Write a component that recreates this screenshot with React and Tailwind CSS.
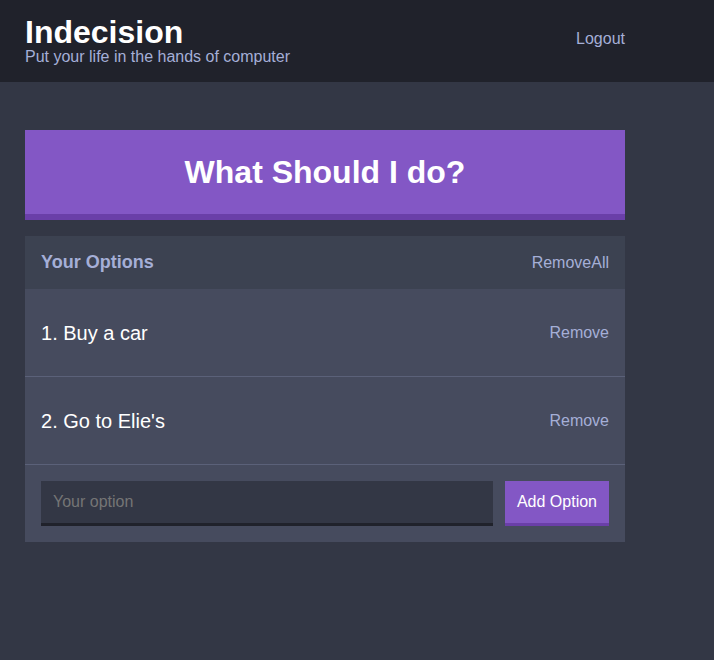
import React from "react";

export default function App() {
  const options = ["Buy a car", "Go to Elie's"];
  return (
    <div className="min-h-screen bg-[#333745] text-white" style={{ fontFamily: '"Liberation Sans", Arial, Helvetica, sans-serif' }}>
      <header className="bg-[#20222b] h-[82px]">
        <div className="ml-[25px] w-[600px] h-full flex items-center justify-between">
          <div className="flex flex-col">
            <h1 className="text-[32px] leading-[32px] font-bold m-0">Indecision</h1>
            <h2 className="text-[16px] leading-[18px] text-[#a5afd7] font-normal">Put your life in the hands of computer</h2>
          </div>
          <button className="text-[16px] text-[#a5afd7] bg-transparent mb-[4px]">Logout</button>
        </div>
      </header>
      <div className="ml-[25px] w-[600px] pt-[48px]">
        <button className="w-full h-[90px] bg-[#8357c5] border-b-[6px] border-[#6a3fa8] text-[32px] font-bold text-white flex items-center justify-center">
          What Should I do?
        </button>
        <div className="mt-[16px] bg-[#464b5e]">
          <div className="bg-[#3c4251] h-[53px] px-[16px] flex items-center justify-between">
            <h3 className="text-[18px] font-bold text-[#a5afd7]">Your Options</h3>
            <button className="text-[16px] text-[#a5afd7]">RemoveAll</button>
          </div>
          {options.map((o, i) => (
            <div key={o} className="h-[88px] px-[16px] border-b border-[#5b6179] flex items-center justify-between">
              <p className="text-[20px] text-white">{i + 1}. {o}</p>
              <button className="text-[16px] text-[#a5afd7]">Remove</button>
            </div>
          ))}
          <form className="p-[16px] flex gap-[12px]" onSubmit={(e) => e.preventDefault()}>
            <input
              type="text"
              placeholder="Your option"
              className="flex-1 h-[45px] bg-[#333745] border-b-[3px] border-[#20222b] px-[12px] text-[16px] text-[#a5afd7] placeholder:text-[#757575] outline-none"
            />
            <button className="h-[45px] px-[12px] bg-[#8357c5] border-b-[3px] border-[#6a3fa8] text-[16px] text-white">
              Add Option
            </button>
          </form>
        </div>
      </div>
    </div>
  );
}
